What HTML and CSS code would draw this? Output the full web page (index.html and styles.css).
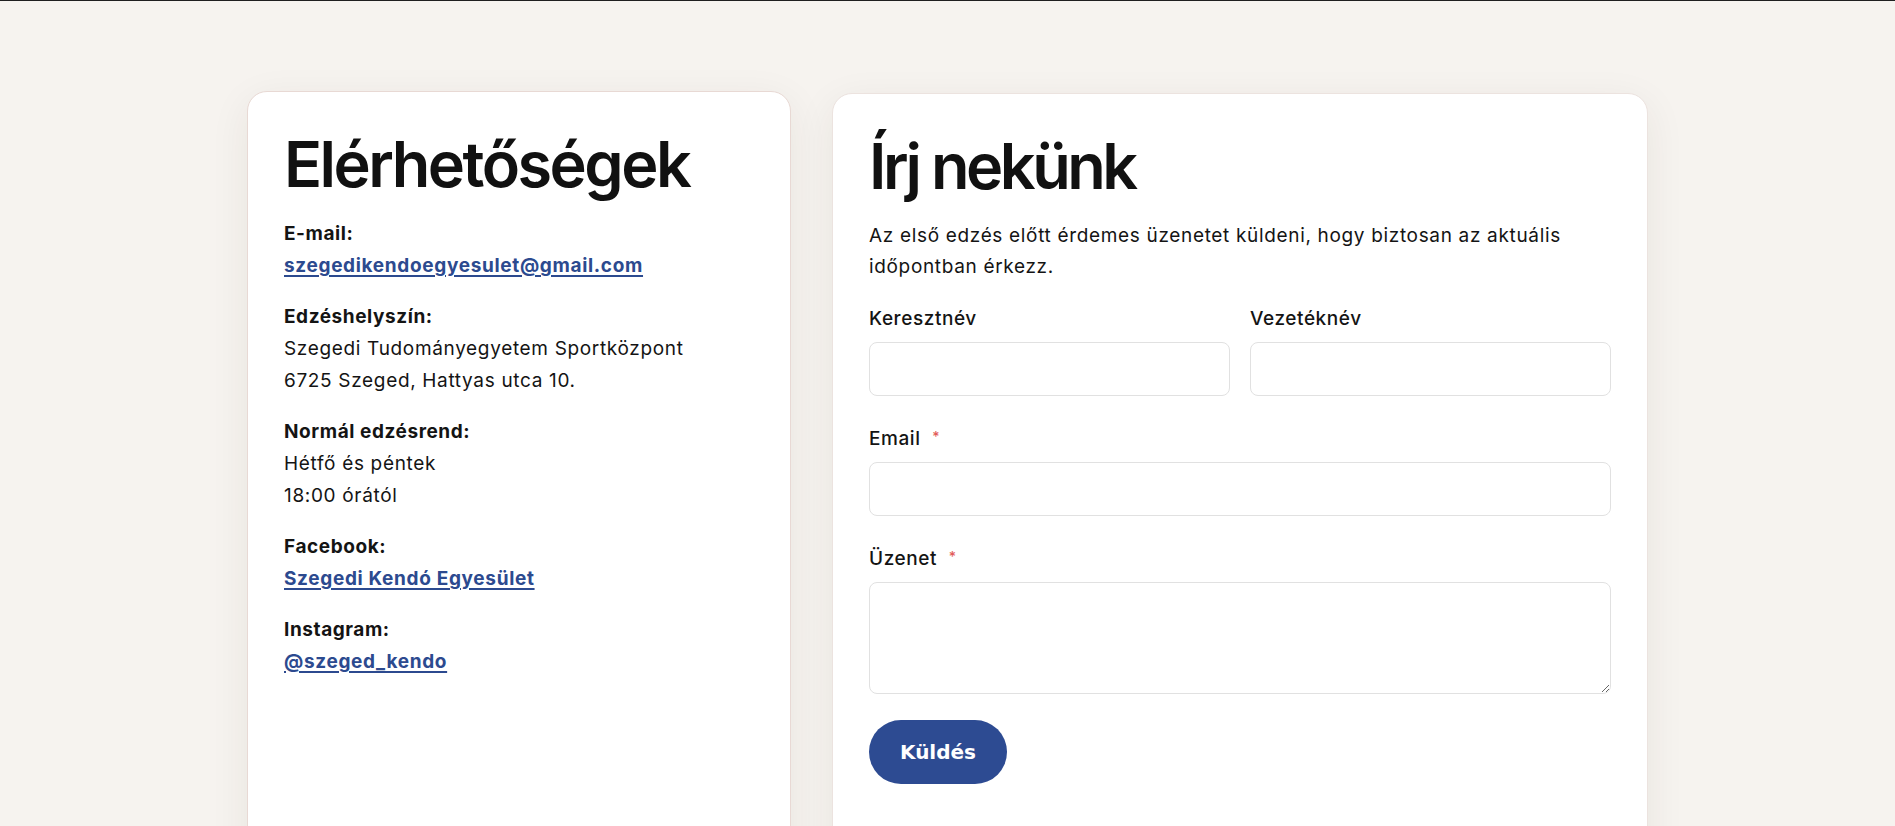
FILE: index.html
```html
<!DOCTYPE html>
<html lang="hu">
<head>
<meta charset="utf-8">
<title>Kapcsolat</title>
<link rel="stylesheet" href="styles.css">
</head>
<body>
<main class="contact">
  <section class="card info">
    <h2 class="title">Elérhetőségek</h2>
    <div class="item">
      <strong>E-mail:</strong>
      <a href="#" class="link">szegedikendoegyesulet@gmail.com</a>
    </div>
    <div class="item">
      <strong>Edzéshelyszín:</strong>
      <span>Szegedi Tudományegyetem Sportközpont</span>
      <span>6725 Szeged, Hattyas utca 10.</span>
    </div>
    <div class="item">
      <strong>Normál edzésrend:</strong>
      <span>Hétfő és péntek</span>
      <span>18:00 órától</span>
    </div>
    <div class="item">
      <strong>Facebook:</strong>
      <a href="#" class="link">Szegedi Kendó Egyesület</a>
    </div>
    <div class="item">
      <strong>Instagram:</strong>
      <a href="#" class="link">@szeged_kendo</a>
    </div>
  </section>
  <section class="card form-card">
    <h2 class="title title-tight">Írj nekünk</h2>
    <p class="lead">Az első edzés előtt érdemes üzenetet küldeni, hogy biztosan az aktuális időpontban érkezz.</p>
    <form class="form">
      <div class="row">
        <div class="field">
          <label class="label">Keresztnév</label>
          <input class="input" type="text">
        </div>
        <div class="field">
          <label class="label">Vezetéknév</label>
          <input class="input" type="text">
        </div>
      </div>
      <div class="field">
        <label class="label">Email <span class="req">*</span></label>
        <input class="input" type="email">
      </div>
      <div class="field">
        <label class="label">Üzenet <span class="req">*</span></label>
        <textarea class="input textarea"></textarea>
      </div>
      <div>
        <button type="button" class="btn">Küldés</button>
      </div>
    </form>
  </section>
</main>
</body>
</html>
```

FILE: styles.css
```css
* { box-sizing: border-box; }
html, body { height: 100%; }
body {
  margin: 0;
  background: #f6f3ef;
  border-top: 1px solid #1f1f1f;
  font-family: Inter, "Open Sans", sans-serif;
  color: #141414;
  overflow: hidden;
}
.contact {
  width: 1401px;
  margin: 90px auto 0;
  display: grid;
  grid-template-columns: 2fr 3fr;
  column-gap: 41px;
  align-items: start;
}
.card {
  background: #fff;
  border: 1px solid #ece3df;
  border-radius: 20px;
  padding: 36px;
  min-height: 820px;
  box-shadow: 0 10px 40px rgba(60, 40, 20, 0.07);
}
.info { border-color: #e8d9d4; }
.form-card { margin-top: 2px; }
.title {
  margin: 0 0 18px;
  font-size: 63px;
  line-height: 72px;
  font-weight: 600;
  letter-spacing: -0.04em;
  color: #111;
}
.title-tight { letter-spacing: -0.055em; }
.item {
  display: flex;
  flex-direction: column;
  align-items: flex-start;
  font-size: 19px;
  line-height: 32px;
  letter-spacing: 0.035em;
  margin-bottom: 19px;
}
.item strong { font-weight: 700; letter-spacing: 0.03em; }
.link {
  color: #2c4a8f;
  font-weight: 700;
  text-decoration: underline;
  text-decoration-thickness: 2px;
  text-underline-offset: 3px;
}
.lead {
  margin: 0 0 22px;
  font-size: 19px;
  line-height: 31px;
  letter-spacing: 0.035em;
  max-width: 720px;
}
.form {
  display: flex;
  flex-direction: column;
  gap: 26px;
}
.row {
  display: grid;
  grid-template-columns: 1fr 1fr;
  column-gap: 20px;
}
.field { display: flex; flex-direction: column; }
.label {
  font-size: 19px;
  line-height: 30px;
  font-weight: 500;
  letter-spacing: 0.03em;
  margin-bottom: 8px;
}
.req {
  color: #e25c5a;
  font-size: 14px;
  vertical-align: 3px;
  margin-left: 6px;
}
.input {
  height: 54px;
  border: 1px solid #e1e1e1;
  border-radius: 8px;
  background: #fff;
  font: inherit;
  padding: 0 14px;
  width: 100%;
}
.textarea {
  height: 112px;
  padding: 10px 14px;
  resize: vertical;
}
.btn {
  width: 138px;
  height: 64px;
  border: none;
  border-radius: 32px;
  background: #2d4b92;
  color: #fff;
  font-family: "DejaVu Sans", sans-serif;
  font-weight: 700;
  font-size: 20px;
  cursor: pointer;
}
```
